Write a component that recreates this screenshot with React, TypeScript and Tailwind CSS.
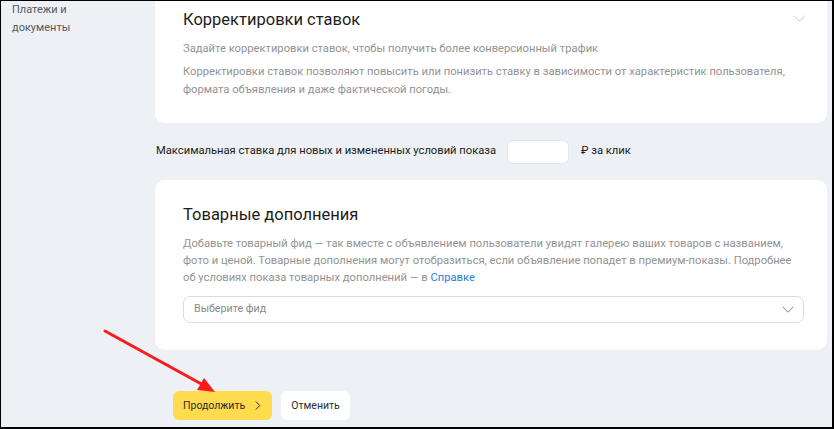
import React from 'react';

const font = { fontFamily: 'Roboto, "Noto Sans", Arial, sans-serif' };

const Chevron = ({ className }: { className?: string }) => (
  <svg viewBox="0 0 14 8" className={className} fill="none">
    <path d="M1 1l6 6 6-6" stroke="currentColor" strokeWidth="1.2" strokeLinecap="round" strokeLinejoin="round" />
  </svg>
);

export default function App() {
  return (
    <div
      className="relative w-[834px] h-[429px] overflow-hidden bg-[#edf0f5] border-black border-t border-l border-r-2 border-b-2 flex text-[11.2px] whitespace-nowrap"
      style={font}
    >
      {/* sidebar */}
      <div className="w-[154px] shrink-0 pl-[11px] text-[#555a61] text-[11px] leading-[18px]">
        Платежи и
        <br />
        документы
      </div>

      {/* main */}
      <div className="flex-1 pr-[5px] flex flex-col">
        <div className="bg-white rounded-b-[10px] pl-[28px] pr-[24px] pt-[7px] pb-[24px] relative">
          <h2 className="text-[16.5px] leading-[24px] text-[#1c1c1c]">Корректировки ставок</h2>
          <Chevron className="absolute right-[21px] top-[14px] w-[13px] h-[7px] text-[#d4d6da]" />
          <p className="mt-[8px] leading-[18px] text-[#939393]">
            Задайте корректировки ставок, чтобы получить более конверсионный трафик
          </p>
          <p className="mt-[5px] leading-[18px] text-[#939393]">
            Корректировки ставок позволяют повысить или понизить ставку в зависимости от характеристик пользователя,
            <br />
            формата объявления и даже фактической погоды.
          </p>
        </div>

        <div className="flex items-center mt-[17px] pl-[1px] h-[23px] text-[#1c1c1c]">
          <span>Максимальная ставка для новых и измененных условий показа</span>
          <div className="ml-[11px] w-[62px] h-[24px] bg-white rounded-[6px] border border-[#e3e6ea]" />
          <span className="ml-[12px]">₽ за клик</span>
        </div>

        <div className="mt-[17px] bg-white rounded-[10px] pl-[28px] pr-[23px] pt-[23px] pb-[27px]">
          <h2 className="text-[16.5px] leading-[24px] text-[#1c1c1c]">Товарные дополнения</h2>
          <p className="mt-[8px] leading-[17px] text-[#939393]">
            Добавьте товарный фид — так вместе с объявлением пользователи увидят галерею ваших товаров с названием,
            <br />
            фото и ценой. Товарные дополнения могут отобразиться, если объявление попадет в премиум-показы. Подробнее
            <br />
            об условиях показа товарных дополнений — в <span className="text-[#2b7bdc]">Справке</span>
          </p>
          <div className="mt-[10px] h-[27px] rounded-[7px] border border-[#d9dbdf] flex items-center justify-between pl-[10px] pr-[9px]">
            <span className="text-[10.7px] text-[#8a8a8a]">Выберите фид</span>
            <Chevron className="w-[12px] h-[7px] text-[#9ea2a8]" />
          </div>
        </div>

        <div className="mt-[41px] ml-[18px] flex gap-[9px]">
          <button className="h-[29px] w-[99px] rounded-[6px] bg-[#ffdb4d] flex items-center pl-[10px] text-[10.5px] text-[#2b2b2b]">
            Продолжить
            <svg viewBox="0 0 6 10" className="ml-[10px] w-[6px] h-[9px]" fill="none">
              <path d="M1 1l4 4-4 4" stroke="#2b2b2b" strokeWidth="1.1" strokeLinecap="round" strokeLinejoin="round" />
            </svg>
          </button>
          <button className="h-[29px] w-[69px] rounded-[6px] bg-white flex items-center justify-center text-[10.5px] text-[#2b2b2b]">
            Отменить
          </button>
        </div>
      </div>

      {/* red annotation arrow */}
      <svg className="absolute left-0 top-0 w-[834px] h-[429px] pointer-events-none" viewBox="0 0 834 429">
        <line x1="104" y1="330" x2="204" y2="385" stroke="#ff1a1a" strokeWidth="3" strokeLinecap="round" />
        <polygon points="214,391 196,389 203,377" fill="#ff1a1a" />
      </svg>
    </div>
  );
}
